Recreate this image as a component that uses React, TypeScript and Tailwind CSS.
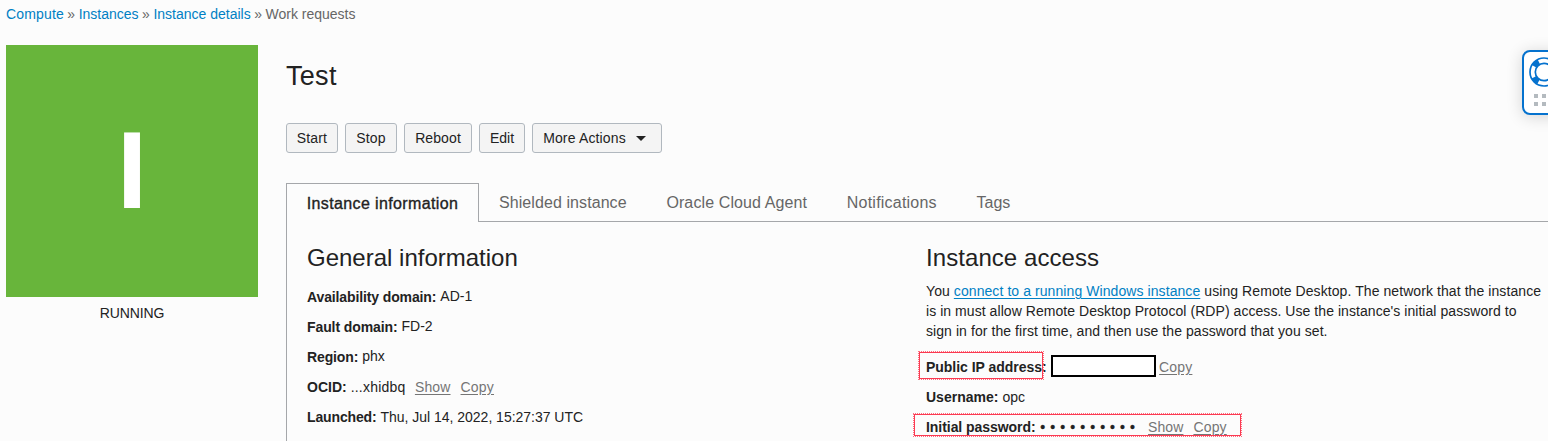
import type { ReactNode } from "react";

function Button({ children, className = "" }: { children: ReactNode; className?: string }) {
  return (
    <button
      className={`flex h-[30px] items-center justify-center rounded-[3px] border border-[#b1b8bf] bg-[#f4f4f4] whitespace-nowrap ${className}`}
    >
      {children}
    </button>
  );
}

function Field({ label, labelClass = "", children }: { label: string; labelClass?: string; children: ReactNode }) {
  return (
    <div className="flex h-[30px] items-center gap-1 whitespace-nowrap">
      <span className={`font-bold ${labelClass}`}>{label}</span>
      {children}
    </div>
  );
}

function Action({ children, className = "" }: { children: ReactNode; className?: string }) {
  return (
    <a className={`text-[#757575] underline underline-offset-2 ${className}`} href="#">
      {children}
    </a>
  );
}

/* Hand-marked highlight frame: a solid red line with a grainy outer edge. */
function Highlight({ className }: { className: string }) {
  return (
    <div className={`absolute border border-dotted border-[#fd6f80] bg-clip-padding ${className}`}>
      <div className="h-full w-full border border-[#fb3a52]" />
    </div>
  );
}

function HelpIcon() {
  return (
    <svg className="h-[30px] w-[30px] shrink-0" viewBox="0 0 30 30" fill="none" stroke="#0572ce">
      <circle cx="15" cy="15" r="14" strokeWidth="1.7" />
      <circle cx="15" cy="15" r="8.7" strokeWidth="1.7" />
      <circle cx="15" cy="15" r="11.2" strokeWidth="5.6" strokeDasharray="6.4 11.19" strokeDashoffset="-5.6" />
    </svg>
  );
}

export default function App() {
  return (
    <div className="relative h-[441px] w-[1548px] overflow-hidden bg-[#fcfcfc] font-['Liberation_Sans',Arial,sans-serif] text-sm leading-5 text-[#222]">
      <nav className="flex h-[45px] gap-[3.5px] pt-1 pl-[6px] whitespace-nowrap text-[#0080c4]">
        <a href="#" className="tracking-[0.15px]">Compute</a>
        <span className="text-[#666]">»</span>
        <a href="#">Instances</a>
        <span className="text-[#666]">»</span>
        <a href="#">Instance details</a>
        <span className="text-[#666]">»</span>
        <span className="text-[#666]">Work requests</span>
      </nav>

      <div className="flex pl-[6px]">
        <aside className="w-[252px] shrink-0">
          <div className="flex h-[252px] items-center justify-center bg-[#68b53b] pb-[2px] text-[110px] leading-none font-bold text-white">
            I
          </div>
          <p className="pt-[6px] text-center tracking-[-0.1px]">RUNNING</p>
        </aside>

        <main className="ml-7 w-[1262px] shrink-0">
          <h1 className="h-[78px] pt-[15px] text-[27px] leading-8 tracking-[0.3px]">Test</h1>
          <div className="flex h-[60px] gap-[7px]">
            <Button className="w-[52px] tracking-[0.15px]">Start</Button>
            <Button className="w-[52px] tracking-[0.2px]">Stop</Button>
            <Button className="w-[68px] tracking-[0.1px]">Reboot</Button>
            <Button className="w-[46px]">Edit</Button>
            <Button className="w-[130px] gap-[10px] pr-[5px] tracking-[0.15px]">
              More Actions
              <svg className="h-[5px] w-[10px]" viewBox="0 0 10 5">
                <path d="M0 0h10L5 5z" fill="#222" />
              </svg>
            </Button>
          </div>

          <div className="flex h-[39px] text-base text-[#666]">
            <div className="flex w-[193px] shrink-0 items-center justify-center border-x border-t border-[#a5a7aa] pt-[2px] tracking-[0.38px] whitespace-nowrap text-[#222] [-webkit-text-stroke:0.35px_#222]">
              Instance information
            </div>
            <div className="flex grow items-center gap-[39.7px] border-b border-[#a5a7aa] pt-[2px] pl-5 whitespace-nowrap">
              <span className="tracking-[0.08px]">Shielded instance</span>
              <span className="tracking-[0.11px]">Oracle Cloud Agent</span>
              <span className="tracking-[0.22px]">Notifications</span>
              <span>Tags</span>
            </div>
          </div>

          <div className="flex h-[219px] border-l border-[#a5a7aa] pt-[20px] pl-5">
            <section className="w-[619px] shrink-0">
              <h2 className="h-[39px] text-2xl leading-8">General information</h2>
              <Field label="Availability domain:" labelClass="pt-[2px] tracking-[-0.12px]">AD-1</Field>
              <Field label="Fault domain:" labelClass="pt-[2px] tracking-[-0.1px]">FD-2</Field>
              <Field label="Region:" labelClass="pt-[2px] tracking-[-0.12px]">phx</Field>
              <Field label="OCID:" labelClass="pt-[2px]">
                <span className="mr-[5.5px] pt-[2px] tracking-[0.2px]">...xhidbq</span>
                <Action className="mr-[6px] pt-[2px] tracking-[0.15px]">Show</Action>
                <Action className="pt-[2px] tracking-[0.2px]">Copy</Action>
              </Field>
              <Field label="Launched:" labelClass="pt-[2px] tracking-[-0.14px]">
                <span className="pt-[2px] tracking-[-0.02px]">Thu, Jul 14, 2022, 15:27:37 UTC</span>
              </Field>
            </section>

            <section className="w-[622px] shrink-0">
              <h2 className="h-[39px] text-2xl leading-8 tracking-[0.07px]">Instance access</h2>
              <p className="h-[71px] whitespace-nowrap">
                <span className="tracking-[0.078px]">
                  You{" "}
                  <a href="#" className="text-[#0080c4] underline underline-offset-2">
                    connect to a running Windows instance
                  </a>{" "}
                  using Remote Desktop. The network that the instance
                </span>
                <br />
                <span className="tracking-[0.055px]">
                  is in must allow Remote Desktop Protocol (RDP) access. Use the instance's initial password to
                </span>
                <br />
                <span className="tracking-[0.07px]">
                  sign in for the first time, and then use the password that you set.
                </span>
              </p>
              <Field label="Public IP address:" labelClass="tracking-[-0.03px]">
                <span className="mb-[2px] h-[22px] w-[105px] border-2 border-black bg-white" />
                <Action className="-ml-[0.5px] tracking-[0.15px]">Copy</Action>
              </Field>
              <Field label="Username:">opc</Field>
              <Field label="Initial password:" labelClass="tracking-[-0.05px]">
                <span className="mr-[4px] ml-[0.7px] tracking-[5.07px] [-webkit-text-stroke:0.4px_#222]">••••••••••</span>
                <Action className="mr-[6px] tracking-[0.1px]">Show</Action>
                <Action className="tracking-[0.15px]">Copy</Action>
              </Field>
            </section>
          </div>
        </main>
      </div>

      <Highlight className="top-[351px] left-[918px] h-[29px] w-[126px]" />
      <Highlight className="top-[413px] left-[913px] h-[24px] w-[329px]" />

      <div className="absolute top-[50px] left-[1522px] h-[65px] w-[44px] rounded-lg border-2 border-[#0572ce] bg-white pt-[5px] pl-[5px] shadow-[0_2px_16px_rgba(0,0,0,0.16)]">
        <HelpIcon />
        <div className="mt-[7px] ml-[5px] grid w-fit grid-cols-3 gap-1">
          <i className="size-1 bg-[#b4babf]" />
          <i className="size-1 bg-[#b4babf]" />
          <i className="size-1 bg-[#b4babf]" />
          <i className="size-1 bg-[#b4babf]" />
          <i className="size-1 bg-[#b4babf]" />
          <i className="size-1 bg-[#b4babf]" />
        </div>
      </div>
    </div>
  );
}
